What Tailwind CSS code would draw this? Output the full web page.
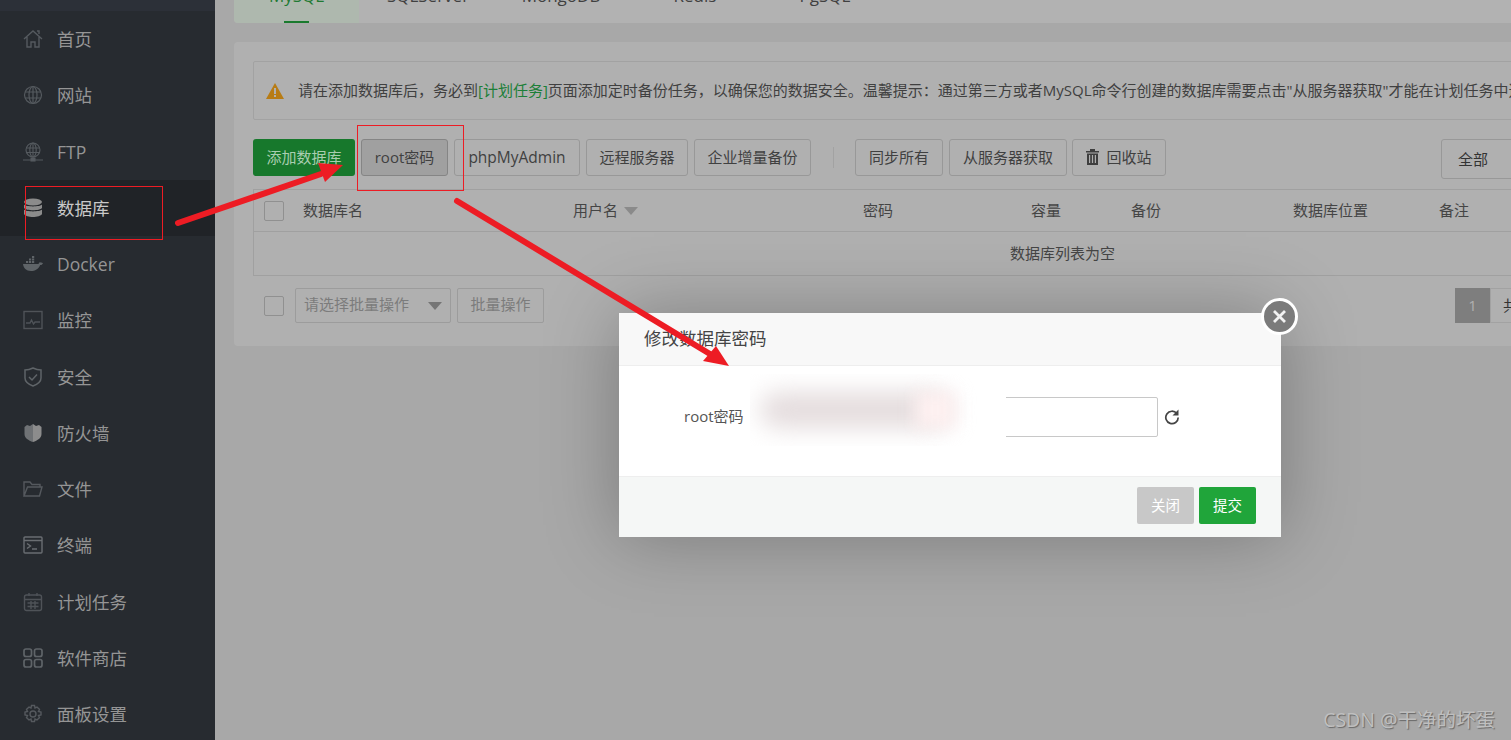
<!DOCTYPE html>
<html lang="zh-CN">
<head>
    <meta charset="UTF-8" />
    <title>数据库</title>
    <script src="https://cdn.jsdelivr.net/npm/@tailwindcss/browser@4"></script>
</head>
<body class="bg-[#a8a8a8] font-['Open_Sans','Noto_Sans_CJK_SC',sans-serif] overflow-hidden">
<div class="relative flex w-[1511px] h-[740px] overflow-hidden">

    <!-- sidebar -->
    <aside class="w-[215px] shrink-0 bg-[#272b30] text-[#959595] text-[17.500px]">
        <div class="h-[11px] bg-[#2c3038]"></div>
        <nav>
            <a class="h-[56.25px] flex items-center pl-[23px] gap-[14px]">
                <svg class="w-[20px] h-[20px]" viewBox="0 0 20 20" fill="none" stroke="#555a5f" stroke-width="1.4"><path d="M1 10 10 2l9 8M4 8v10h4v-5h4v5h4V8M14 2h2v3"/></svg>
                <span>首页</span>
            </a>
            <a class="h-[56.25px] flex items-center pl-[23px] gap-[14px]">
                <svg class="w-[20px] h-[20px]" viewBox="0 0 20 20" fill="none" stroke="#555a5f" stroke-width="1.2"><circle cx="10" cy="10" r="8.5"/><ellipse cx="10" cy="10" rx="4" ry="8.5"/><path d="M2 7h16M2 13h16M10 1.500v17"/></svg>
                <span>网站</span>
            </a>
            <a class="h-[56.25px] flex items-center pl-[23px] gap-[14px]">
                <svg class="w-[20px] h-[20px]" viewBox="0 0 20 20" fill="none" stroke="#555a5f" stroke-width="1.1"><circle cx="10" cy="8" r="7"/><ellipse cx="10" cy="8" rx="3.200" ry="7"/><path d="M3 6h14M3 10.500h14M10 1v14M0 18h20"/><rect x="8" y="16" width="4" height="3" fill="#555a5f"/></svg>
                <span>FTP</span>
            </a>
            <a class="h-[56.25px] flex items-center pl-[23px] gap-[14px] bg-[#202327] text-[#c9c9c9]">
                <svg class="w-[20px] h-[20px]" viewBox="0 0 20 20" fill="#8b8b8b"><ellipse cx="10" cy="4" rx="9" ry="3.500"/><path d="M1 6.500c2 2.500 16 2.500 18 0v3.500c-2 3-16 3-18 0zM1 11.500c2 2.500 16 2.500 18 0V16c-2 4-16 4-18 0z"/></svg>
                <span>数据库</span>
            </a>
            <a class="h-[56.25px] flex items-center pl-[23px] gap-[14px]">
                <svg class="w-[20px] h-[20px]" viewBox="0 0 20 20" fill="#5f6468"><path d="M0 10h15.500c.5-1.500 1.500-2 2-1.500.8-.3 1.800 0 2.500.7-.6 1.300-1.600 1.800-2.800 1.800C15.500 15 12 17 8 17c-5 0-7.500-3-8-7z"/><path d="M3 7h2.200v2H3zM6 7h2.200v2H6zM9 7h2.200v2H9zM6 4.500h2.200v2H6zM9 4.500h2.200v2H9zM9 2h2.200v2H9z"/></svg>
                <span>Docker</span>
            </a>
            <a class="h-[56.25px] flex items-center pl-[23px] gap-[14px]">
                <svg class="w-[20px] h-[20px]" viewBox="0 0 20 20" fill="none" stroke="#4f5358" stroke-width="1.400"><rect x="1" y="1.500" width="18" height="17"/><path d="M3 13h4l1.500-3 2 4 1.500-2h5"/></svg>
                <span>监控</span>
            </a>
            <a class="h-[56.25px] flex items-center pl-[23px] gap-[14px]">
                <svg class="w-[20px] h-[20px]" viewBox="0 0 20 20" fill="none" stroke="#5f6468" stroke-width="1.500"><path d="M10 1c3 1.500 5 2 8 2v8c0 4-4 6.500-8 8-4-1.500-8-4-8-8V3c3 0 5-.5 8-2z"/><path d="m6 10 3 3 5-5.500"/></svg>
                <span>安全</span>
            </a>
            <a class="h-[56.25px] flex items-center pl-[23px] gap-[14px]">
                <svg class="w-[20px] h-[20px]" viewBox="0 0 20 20"><path fill="#6f7275" d="M10 1 7 3 4 2 1.500 4v7c0 4 4 6.500 8.500 8z"/><path fill="#8c8c8c" d="m10 1 3 2 3-1 2.500 2v7c0 4-4 6.500-8.500 8z"/></svg>
                <span>防火墙</span>
            </a>
            <a class="h-[56.25px] flex items-center pl-[23px] gap-[14px]">
                <svg class="w-[20px] h-[20px]" viewBox="0 0 20 20" fill="none" stroke="#55595e" stroke-width="1.400"><path d="M1 17V3h6l2 2.500h8V8M1 17h15.500L19 8H4.500z"/></svg>
                <span>文件</span>
            </a>
            <a class="h-[56.25px] flex items-center pl-[23px] gap-[14px]">
                <svg class="w-[20px] h-[20px]" viewBox="0 0 20 20" fill="none" stroke="#6a6e72" stroke-width="1.400"><rect x="1" y="2" width="18" height="16" rx="1"/><path d="M1 5.500h18M4 8.500l3.500 2.500L4 13.500M9 14h5"/></svg>
                <span>终端</span>
            </a>
            <a class="h-[56.25px] flex items-center pl-[23px] gap-[14px]">
                <svg class="w-[20px] h-[20px]" viewBox="0 0 20 20" fill="none" stroke="#4f5358" stroke-width="1.400"><rect x="1.500" y="3" width="17" height="15.500" rx="2"/><path d="M1.500 7.500h17M6 1v3M14 1v3M4.500 11h11M4.500 14.500h11M8 9v8M12 9v8"/></svg>
                <span>计划任务</span>
            </a>
            <a class="h-[56.25px] flex items-center pl-[23px] gap-[14px]">
                <svg class="w-[20px] h-[20px]" viewBox="0 0 20 20" fill="none" stroke="#5f6468" stroke-width="1.700"><rect x="1" y="1" width="7.500" height="7.500" rx="2"/><rect x="11.500" y="1" width="7.500" height="7.500" rx="2"/><rect x="1" y="11.500" width="7.500" height="7.500" rx="2"/><rect x="11.500" y="11.500" width="7.500" height="7.500" rx="2"/></svg>
                <span>软件商店</span>
            </a>
            <a class="h-[56.25px] flex items-center pl-[23px] gap-[14px]">
                <svg class="w-[20px] h-[20px]" viewBox="0 0 20 20" fill="none" stroke="#55595e" stroke-width="1.400"><circle cx="10" cy="10" r="3"/><path d="m8.500 1.500h3l.5 2.500 2-1 2.500 2.500-1 2 2.500.5v3l-2.500.5 1 2-2.500 2.500-2-1-.5 2.500h-3l-.5-2.500-2 1-2.500-2.500 1-2-2.500-.5v-3l2.500-.5-1-2L6 3l2 1z"/></svg>
                <span>面板设置</span>
            </a>
        </nav>
    </aside>

    <!-- content -->
    <main class="flex-1 min-w-0 overflow-hidden pl-[19px] text-[15px] text-[#404040]">
        <div class="-mt-[40px] h-[63px] w-[1400px] bg-[#b2b2b2] rounded-b-[4px] flex items-stretch text-[17px]">
            <div class="w-[125px] bg-[#aeb8ae] rounded-bl-[4px] relative text-center pt-[23px] text-[#1f7a33]">MySQL
                <div class="absolute left-[50px] bottom-0 w-[25px] h-[2px] bg-[#1a7a2e]"></div>
            </div>
            <div class="w-[138px] text-center pt-[23px]">SQLServer</div>
            <div class="w-[128px] text-center pt-[23px]">MongoDB</div>
            <div class="w-[140px] text-center pt-[23px]">Redis</div>
            <div class="w-[120px] text-center pt-[23px]">PgSQL</div>
        </div>

        <section class="mt-[19px] w-[1400px] h-[304px] bg-[#b0b0b0] rounded-[4px] p-[19px]">
            <div class="h-[59px] border border-[#a2a2a2] rounded-[2px] flex items-center pl-[12px] whitespace-nowrap">
                <svg class="w-[18px] h-[16px] mr-[14px] shrink-0" viewBox="0 0 18 16"><path fill="#b87c14" d="M9 0 18 16H0z"/><path fill="#b0b0b0" d="M8 5h2v6H8zM8 12h2v2H8z"/></svg>
                <span>请在添加数据库后，务必到<span class="text-[#1c7f38]">[计划任务]</span>页面添加定时备份任务，以确保您的数据安全。温馨提示：通过第三方或者MySQL命令行创建的数据库需要点击"从服务器获取"才能在计划任务中选择备份</span>
            </div>

            <div class="mt-[19px] flex items-start">
                <button class="w-[102px] h-[37px] bg-[#17782c] text-[#a9cdb0] rounded-[3px] mr-[6px]">添加数据库</button>
                <button class="w-[87px] h-[37px] bg-[#a0a0a0] border border-[#858585] rounded-[3px] mr-[6px]">root密码</button>
                <button class="w-[126px] h-[37px] border border-[#989898] rounded-[3px] mr-[6px] text-[15.500px]">phpMyAdmin</button>
                <button class="w-[102px] h-[37px] border border-[#989898] rounded-[3px] mr-[6px]">远程服务器</button>
                <button class="w-[117px] h-[37px] border border-[#989898] rounded-[3px]">企业增量备份</button>
                <div class="w-px h-[21px] mt-[8px] bg-[#a2a2a2] ml-[22px] mr-[21px]"></div>
                <button class="w-[88px] h-[37px] border border-[#989898] rounded-[3px] mr-[6px]">同步所有</button>
                <button class="w-[118px] h-[37px] border border-[#989898] rounded-[3px] mr-[5px]">从服务器获取</button>
                <button class="w-[94px] h-[37px] border border-[#989898] rounded-[3px] flex items-center justify-center gap-[7px]">
                    <svg class="w-[13px] h-[16px] -mt-[2px]" viewBox="0 0 13 16" fill="#3e3e3e"><path d="M4 0h5v2h4v1.500H0V2h4zM1 4.500h11V16H1zM3 6v8h1.200V6zM5.900 6v8h1.200V6zM8.800 6v8H10V6z"/></svg>
                    <span>回收站</span>
                </button>
                <div class="ml-[275px] w-[100px] h-[40px] border border-[#989898] rounded-[3px] pl-[16px] flex items-center text-[#333]">全部</div>
            </div>

            <div class="mt-[10px] border border-[#a0a0a0] w-[1400px]">
                <div class="h-[42px] border-b border-[#a0a0a0] flex items-center text-[#454545]">
                    <div class="w-[49px] pl-[10px]"><div class="w-[20px] h-[20px] border border-[#909090] rounded-[2px]"></div></div>
                    <div class="w-[270px]">数据库名</div>
                    <div class="w-[290px] flex items-center gap-[6px]">用户名<span class="w-0 h-0 border-x-[7px] border-x-transparent border-t-[8px] border-t-[#8a8a8a]"></span></div>
                    <div class="w-[168px]">密码</div>
                    <div class="w-[100px]">容量</div>
                    <div class="w-[162px]">备份</div>
                    <div class="w-[146px]">数据库位置</div>
                    <div>备注</div>
                </div>
                <div class="h-[43px] flex items-center pl-[756px] text-[#454545]">数据库列表为空</div>
            </div>

            <div class="mt-[12px] flex items-start">
                <div class="w-[20px] h-[20px] mt-[8px] ml-[11px] mr-[11px] border border-[#909090] rounded-[2px]"></div>
                <div class="w-[156px] h-[35px] border border-[#9c9c9c] rounded-[2px] flex items-center justify-between pl-[8px] pr-[8px] pb-[3px] text-[#7c7c7c]">请选择批量操作<span class="w-0 h-0 mt-[3px] border-x-[7px] border-x-transparent border-t-[8px] border-t-[#757575]"></span></div>
                <div class="w-[87px] h-[35px] ml-[6px] border border-[#9c9c9c] rounded-[2px] flex items-center justify-center pb-[2px] text-[#7c7c7c]">批量操作</div>
                <div class="ml-[911px] w-[35px] h-[35px] bg-[#7e7e7e] text-[#b0b0b0] flex items-center justify-center">1</div>
                <div class="w-[100px] h-[35px] border border-[#a2a2a2] pl-[12px] flex items-center text-[#333]">共0条</div>
            </div>
        </section>
    </main>

    <!-- modal -->
    <div class="absolute left-[619px] top-[313px] w-[662px] h-[224px] bg-white shadow-[0_0_70px_rgba(0,0,0,0.28)] flex flex-col">
        <div class="h-[53px] bg-[#f8f8f8] border-b border-[#eeeeee] flex items-center pl-[25px] pb-[2px] text-[17.500px] text-[#444]">修改数据库密码</div>
        <div class="h-[110px] relative text-[15px] text-[#555]">
            <span class="absolute left-[65px] top-[39px]">root密码</span>
            <div class="absolute left-[380px] top-[31px] w-[159px] h-[40px] border border-[#c8c8c8] rounded-[2px]"></div>
            <div class="absolute left-[131px] top-[8px] w-[256px] h-[72px] bg-white overflow-hidden">
                <div class="absolute left-[10px] top-[18px] w-[190px] h-[36px] rounded-full bg-[#e4dcdd] blur-[12px]"></div>
                <div class="absolute left-[165px] top-[18px] w-[40px] h-[36px] bg-[#fdf0f0] blur-[8px]"></div>
            </div>
            <svg class="absolute left-[545px] top-[43px] w-[16px] h-[16px]" viewBox="0 0 16 16" fill="none" stroke="#444" stroke-width="1.700"><path d="M12.800 4.500A6.200 6.200 0 1 0 14.200 8.500"/><path fill="#444" stroke="none" d="M14.500 0.500v6h-6z"/></svg>
        </div>
        <div class="flex-1 bg-[#f5f7f6] border-t border-[#eeeeee] flex items-start justify-end pt-[10px] pr-[25px] gap-[5px] text-[14.500px] text-white">
            <button class="w-[57px] h-[37px] bg-[#c8c8c8] rounded-[2px]">关闭</button>
            <button class="w-[57px] h-[37px] bg-[#20a53a] rounded-[2px]">提交</button>
        </div>
    </div>
    <div class="absolute left-[1261px] top-[298px] w-[37px] h-[37px] rounded-full bg-[#7b7b7b] border-[3px] border-white flex items-center justify-center">
        <svg class="w-[15px] h-[15px]" viewBox="0 0 15 15" stroke="#f2f2f2" stroke-width="2.800"><path d="m2 2 11 11M13 2 2 13"/></svg>
    </div>

    <!-- annotations -->
    <div class="absolute left-[25px] top-[186px] w-[138px] h-[54px] border border-[#ed1c24]"></div>
    <div class="absolute left-[357px] top-[125px] w-[107px] h-[66px] border border-[#ed1c24]"></div>
    <svg class="absolute left-0 top-0 w-[1511px] h-[740px] pointer-events-none" viewBox="0 0 1511 740" fill="none">
        <path d="M178 223 321 174" stroke="#ed1c24" stroke-width="6" stroke-linecap="round"/>
        <path d="M343 165 318 163 325 182z" fill="#ed1c24"/>
        <path d="M457 201 710 354" stroke="#ed1c24" stroke-width="6" stroke-linecap="round"/>
        <path d="M729 366 716 346 703 361z" fill="#ed1c24"/>
    </svg>

    <div class="absolute right-[16px] top-[707px] text-[19.500px] leading-[26px] text-[#bfbfbf] [text-shadow:1px_1px_1px_rgba(60,60,60,0.6)]">CSDN @干净的坏蛋</div>
</div>
</body>
</html>
